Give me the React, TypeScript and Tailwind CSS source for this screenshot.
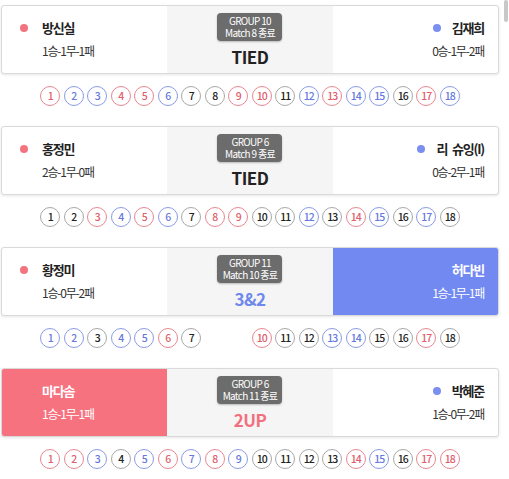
import React from "react";

type C = "r" | "b" | "g" | "-";

interface Side {
  name: string;
  record: string;
  win?: boolean;
}

interface Match {
  group: string;
  match: string;
  score: string;
  scoreColor: string;
  left: Side;
  right: Side;
  holes: string;
}

const matches: Match[] = [
  {
    group: "GROUP 10",
    match: "Match 8 종료",
    score: "TIED",
    scoreColor: "text-[#222222]",
    left: { name: "방신실", record: "1승-1무-1패" },
    right: { name: "김재희", record: "0승-1무-2패" },
    holes: "rbbrrbggrrgbrbbgrb",
  },
  {
    group: "GROUP 6",
    match: "Match 9 종료",
    score: "TIED",
    scoreColor: "text-[#222222]",
    left: { name: "홍정민", record: "2승-1무-0패" },
    right: { name: "리 슈잉(I)", record: "0승-2무-1패" },
    holes: "ggrbrbgrrggbgrbgbg",
  },
  {
    group: "GROUP 11",
    match: "Match 10 종료",
    score: "3&2",
    scoreColor: "text-[#6f88ec]",
    left: { name: "황정미", record: "1승-0무-2패" },
    right: { name: "허다빈", record: "1승-1무-1패", win: true },
    holes: "bbgbbrg--rggbbggrg",
  },
  {
    group: "GROUP 6",
    match: "Match 11 종료",
    score: "2UP",
    scoreColor: "text-[#f2707d]",
    left: { name: "마다솜", record: "1승-1무-1패", win: true },
    right: { name: "박혜준", record: "1승-0무-2패" },
    holes: "rrbgbrbrbggggrbgrr",
  },
];

const font = { fontFamily: '"Noto Sans CJK KR", "Noto Sans", sans-serif' };

function Hole({ n, c }: { n: number; c: C }) {
  if (c === "-") return <div className="w-5 h-5" />;
  const cls =
    c === "r"
      ? "border-[#e88791] text-[#e0606c]"
      : c === "b"
      ? "border-[#8b9be6] text-[#6579de]"
      : "border-[#a8a8a8] text-[#222222]";
  return (
    <div
      className={`w-5 h-5 rounded-full border flex items-center justify-center text-[10.5px] font-medium tracking-[-0.9px] leading-none ${cls}`}
    >
      {n}
    </div>
  );
}

function Card({ m }: { m: Match }) {
  const lw = m.left.win;
  const rw = m.right.win;
  return (
    <div>
      <div className="grid grid-cols-3 h-[69px] rounded-[3px] border border-[#dadada] bg-white shadow-[0_1px_3px_rgba(0,0,0,0.10)] overflow-hidden">
        <div
          className={`flex flex-col justify-center pl-[18px] pb-[2px] ${
            lw ? "bg-[#f7727f] text-white" : "text-[#222222]"
          }`}
        >
          <div className="flex items-center gap-[14px] h-[20px]">
            <span
              className={`w-2 h-2 rounded-full ${lw ? "bg-transparent" : "bg-[#f3737f]"}`}
            />
            <span className="text-[13px] font-bold tracking-[-1.2px]">{m.left.name}</span>
          </div>
          <div
            className={`pl-[22px] mt-[4px] text-[12px] tracking-[-1.2px] leading-[18px] ${
              lw ? "text-white" : "text-[#333333]"
            }`}
          >
            {m.left.record}
          </div>
        </div>
        <div className="bg-[#f5f5f5] flex flex-col items-center pt-[7px]">
          <div className="w-[65px] h-[28px] rounded-[4px] bg-[#6c6c6c] shadow-[0_1px_2px_rgba(0,0,0,0.25)] flex flex-col items-center justify-center text-white text-[10px] leading-[12px] tracking-[-0.7px]">
            <span>{m.group}</span>
            <span>{m.match}</span>
          </div>
          <div className={`mt-[5px] text-[17px] font-bold leading-[22px] tracking-[-0.5px] ${m.scoreColor}`}>
            {m.score}
          </div>
        </div>
        <div
          className={`flex flex-col justify-center items-end pr-[14px] pb-[2px] ${
            rw ? "bg-[#7189f1] text-white" : "text-[#222222]"
          }`}
        >
          <div className="flex items-center gap-[11px] h-[20px]">
            {!rw && <span className="w-2 h-2 rounded-full bg-[#7b8ff0]" />}
            <span className="text-[13px] font-bold tracking-[-1.2px] [word-spacing:3px]">{m.right.name}</span>
          </div>
          <div
            className={`mt-[4px] text-[12px] tracking-[-1.2px] leading-[18px] ${
              rw ? "text-white" : "text-[#333333]"
            }`}
          >
            {m.right.record}
          </div>
        </div>
      </div>
      <div className="mt-[12px] flex justify-center gap-[3.5px]">
        {m.holes.split("").map((c, i) => (
          <Hole key={i} n={i + 1} c={c as C} />
        ))}
      </div>
    </div>
  );
}

export default function App() {
  return (
    <div className="relative w-[509px] h-[479px] bg-white overflow-hidden" style={font}>
      <div className="w-[498px] ml-[1px] pt-[5px] flex flex-col gap-[20px]">
        {matches.map((m, i) => (
          <Card key={i} m={m} />
        ))}
      </div>
      <div className="absolute right-[1px] top-0 w-[4px] h-[22px] rounded-[2px] bg-[#c8c8c8]" />
    </div>
  );
}
